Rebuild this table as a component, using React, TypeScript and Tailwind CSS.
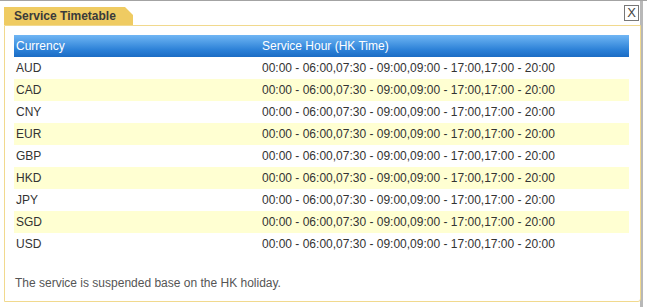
const rows = ["AUD", "CAD", "CNY", "EUR", "GBP", "HKD", "JPY", "SGD", "USD"];
const hours = "00:00 - 06:00,07:30 - 09:00,09:00 - 17:00,17:00 - 20:00";

export default function App() {
  return (
    <div className="w-[647px] h-[307px] bg-white border-t border-[#a3a3a3] font-['Liberation_Sans',Arial,sans-serif] text-[12px] text-[#333]">
      <div className="w-[643px] h-[306px] border-r-[3px] border-[#b8b8b8] pl-[4px] pt-[5px]">
        {/* tab row */}
        <div className="flex items-end justify-between w-[637px] h-[19px]">
          <div className="h-[18px] w-[129px] bg-[#efcb62] [clip-path:polygon(0_0,121px_0,129px_8px,129px_100%,0_100%)] pl-[10px] font-bold leading-[18px] text-[#3a3a3a]">
            Service Timetable
          </div>
          <button className="mb-[1px] mr-[2px] w-[15px] h-[16px] border border-[#777] bg-white text-[13px] leading-[14px] text-[#444] font-['Liberation_Sans',sans-serif] self-start -mt-[1px]">
            X
          </button>
        </div>
        {/* panel */}
        <div className="w-[637px] h-[277px] border border-[#f1d98e] rounded-br-[3px] pl-[9px] pr-[11px] pt-[9px]">
          <table className="w-[615px] border-collapse">
            <thead>
              <tr className="h-[22px] bg-[linear-gradient(#70b6f4,#2a7fd6_70%,#1b6cc4)] text-white text-left">
                <th className="w-[248px] pl-[2px] font-normal">Currency</th>
                <th className="pl-0 font-normal">Service Hour (HK Time)</th>
              </tr>
            </thead>
            <tbody>
              {rows.map((c, i) => (
                <tr key={c} className={`h-[22px] ${i % 2 === 1 ? "bg-[#ffffd2]" : "bg-white"}`}>
                  <td className="pl-[2px]">{c}</td>
                  <td>{hours}</td>
                </tr>
              ))}
            </tbody>
          </table>
          <p className="mt-[19px] pl-[1px] text-[#555]">The service is suspended base on the HK holiday.</p>
        </div>
      </div>
    </div>
  );
}
